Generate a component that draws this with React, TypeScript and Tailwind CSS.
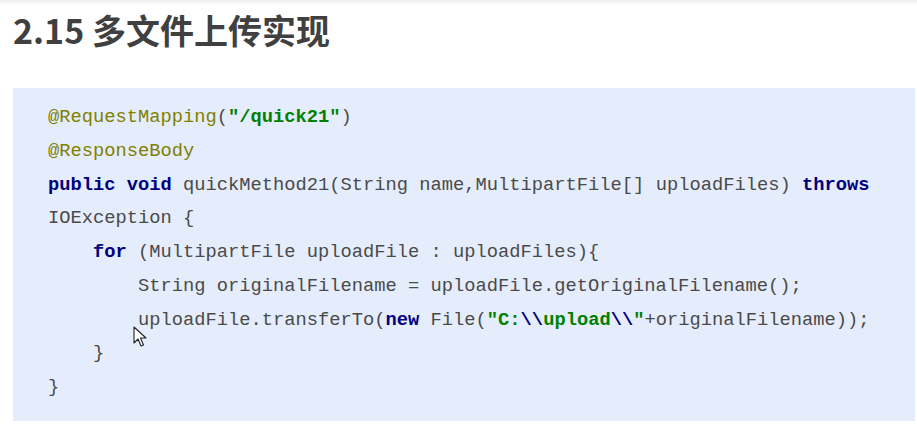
import React from "react";

const A = ({ children }: { children: React.ReactNode }) => (
  <span className="text-[#808000]">{children}</span>
);
const K = ({ children }: { children: React.ReactNode }) => (
  <span className="font-bold text-[#000080]">{children}</span>
);
const S = ({ children }: { children: React.ReactNode }) => (
  <span className="font-bold text-[#008000]">{children}</span>
);

export default function App() {
  return (
    <div className="relative w-[917px] h-[426px] overflow-hidden bg-white">
      <div className="h-[5px] bg-gradient-to-b from-[#ececec] to-white" />
      <h1
        className="pl-[13px] pt-[3px] h-[83px] text-[34px] leading-[44px] font-bold text-[#404040]"
        style={{ fontFamily: '"Noto Sans CJK SC", "Noto Sans", sans-serif' }}
      >
        2.15 多文件上传实现
      </h1>
      <div
        className="ml-[13px] mr-[2px] pt-[13px] pb-[16px] pl-[35px] bg-[#e5edfc] text-[18.75px] leading-[33.75px] text-[#4a4a4a] whitespace-pre"
        style={{ fontFamily: '"Liberation Mono", "Courier New", monospace' }}
      >
        <div>
          <A>@RequestMapping</A>(<S>"/quick21"</S>)
        </div>
        <div>
          <A>@ResponseBody</A>
        </div>
        <div>
          <K>public</K> <K>void</K> quickMethod21(String name,MultipartFile[] uploadFiles) <K>throws</K>
        </div>
        <div>IOException {"{"}</div>
        <div>
          {"    "}<K>for</K> (MultipartFile uploadFile : uploadFiles){"{"}
        </div>
        <div>{"        "}String originalFilename = uploadFile.getOriginalFilename();</div>
        <div>
          {"        "}uploadFile.transferTo(<K>new</K> File(<S>"C:</S><K>{"\\\\"}</K><S>upload</S><K>{"\\\\"}</K><S>"</S>+originalFilename));
        </div>
        <div>{"    }"}</div>
        <div>{"}"}</div>
      </div>
      <svg
        className="absolute left-[133px] top-[326px]"
        width="16"
        height="22"
        viewBox="0 0 16 22"
      >
        <path
          d="M1 1 L1 17 L5 13 L8 20 L10.5 19 L7.5 12 L13 12 Z"
          fill="white"
          stroke="#222"
          strokeWidth="1.1"
          strokeLinejoin="round"
        />
      </svg>
    </div>
  );
}
